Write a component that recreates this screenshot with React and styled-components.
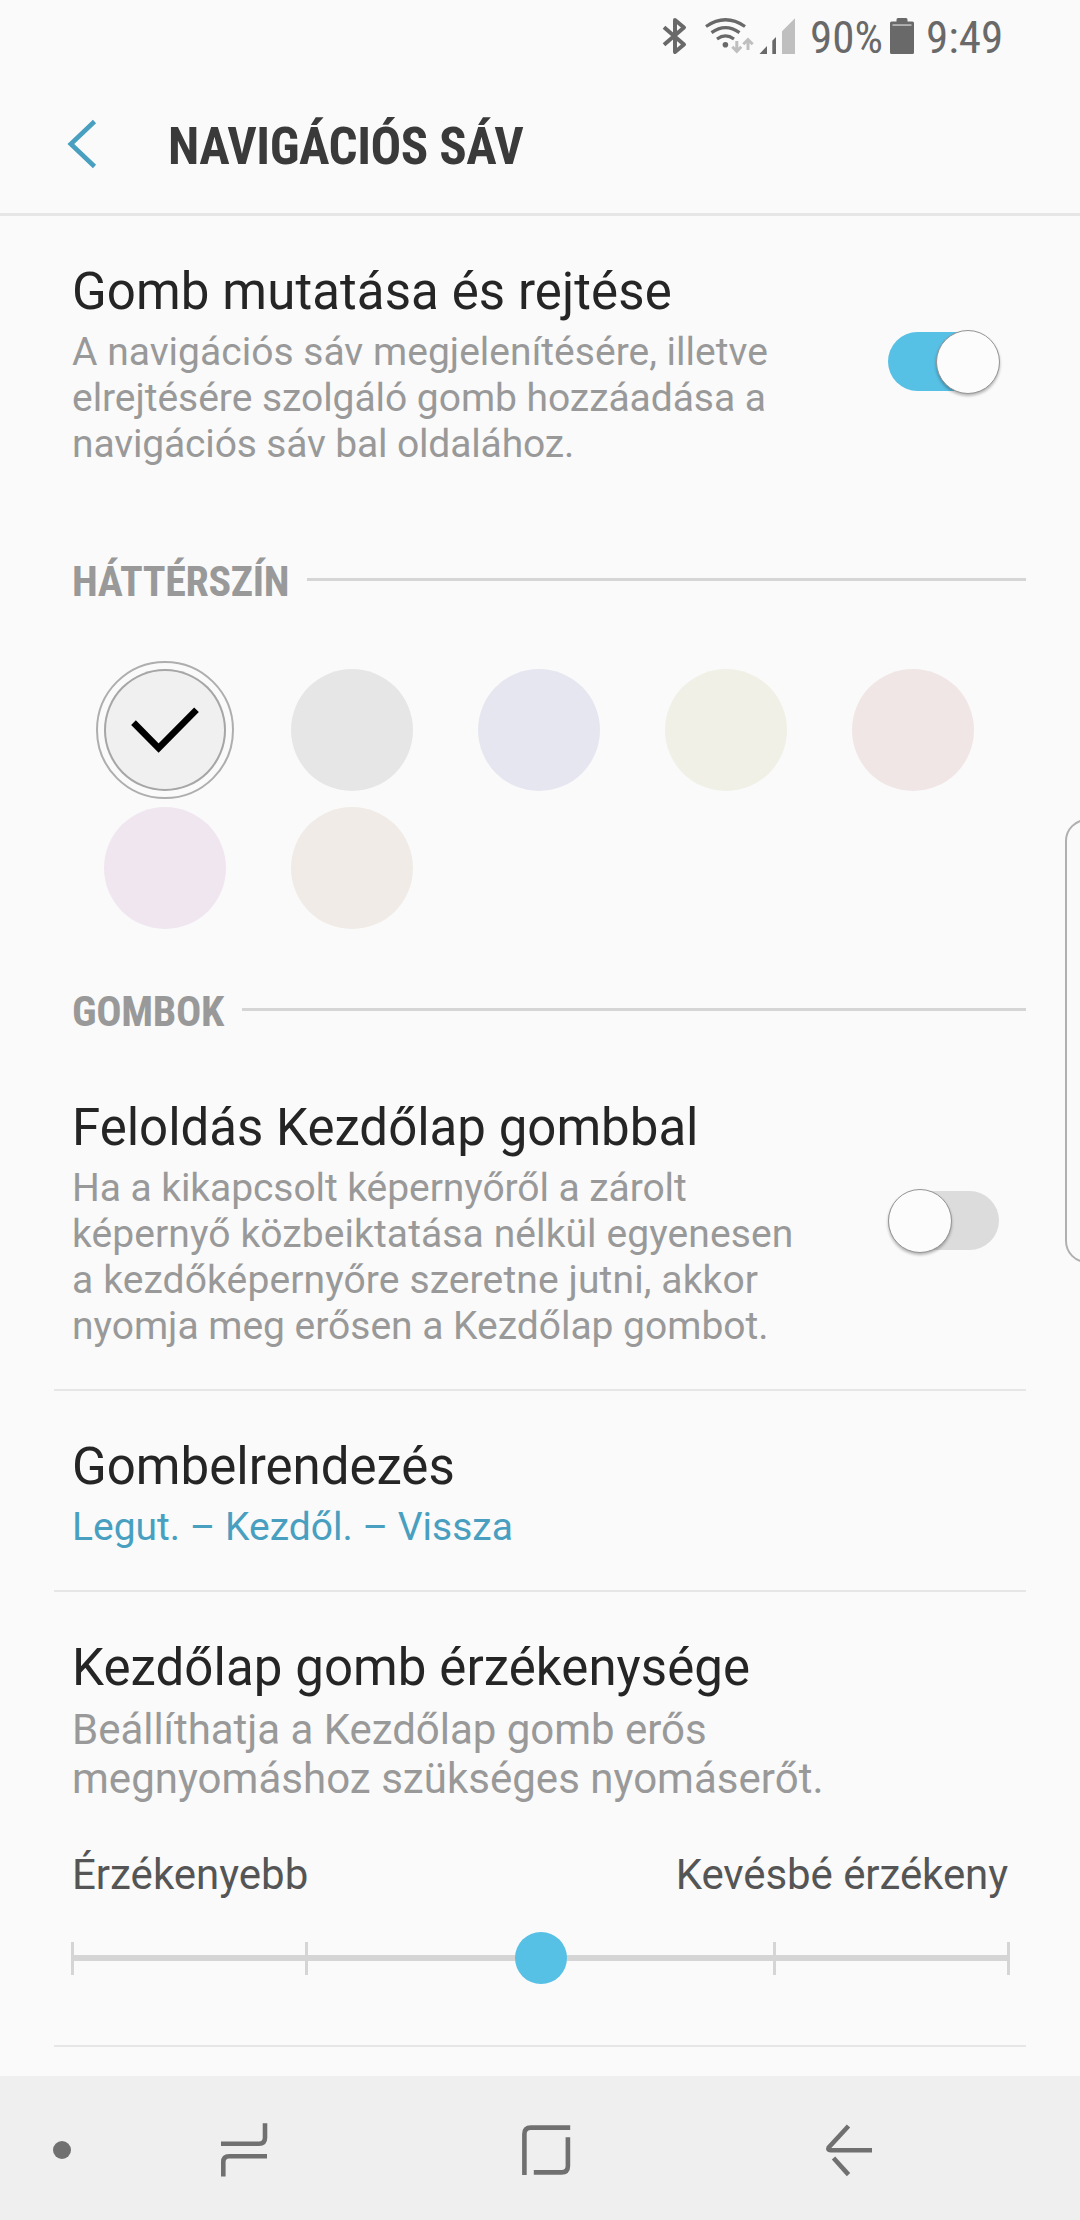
import React from "react";
import styled, { createGlobalStyle } from "styled-components";

const Global = createGlobalStyle`
  *, *::before, *::after { box-sizing: border-box; }
  body { margin: 0; background: #fafafa; }
`;

const Screen = styled.div`
  position: relative;
  width: 1080px;
  height: 2220px;
  display: flex;
  flex-direction: column;
  overflow: hidden;
  background: #fafafa;
  font-family: Roboto, "Noto Sans", sans-serif;
  white-space: nowrap;
`;

const StatusBar = styled.header`
  display: flex;
  height: 72px;
  flex: none;
`;

const StatusIcons = styled.svg`
  width: 810px;
  height: 72px;
  flex: none;
`;

const BatteryIcon = styled.svg`
  width: 26px;
  height: 72px;
  flex: none;
`;

const StatusText = styled.span`
  width: ${(p) => p.$width}px;
  margin-left: ${(p) => p.$gap || 0}px;
  flex: none;
  padding-top: 11px;
  font-family: "Roboto Condensed", Roboto, sans-serif;
  font-stretch: 75%;
  font-size: 45px;
  line-height: 53px;
  color: #696969;
`;

const AppBar = styled.div`
  display: flex;
  align-items: flex-start;
  flex: none;
  height: 144px;
  padding-left: 60px;
  border-bottom: 3px solid #e6e6e6;
`;

const BackChevron = styled.svg`
  width: 48px;
  height: 60px;
  margin-top: 42px;
`;

const PageTitle = styled.h1`
  margin: 45px 0 0 60px;
  font-family: "Roboto Condensed", Roboto, sans-serif;
  font-stretch: 75%;
  font-weight: 700;
  font-size: 51px;
  line-height: 60px;
  letter-spacing: -0.45px;
  color: #3a3a3a;
`;

const Content = styled.main`
  flex: 1;
  display: flex;
  flex-direction: column;
`;

const Row = styled.div`
  display: flex;
  align-items: center;
  justify-content: space-between;
  margin-top: ${(p) => p.$gap || 0}px;
  padding: 46px 81px 40px 72px;
`;

const RowText = styled.div`
  display: flex;
  flex-direction: column;
  gap: 7px;
`;

const RowTitle = styled.div`
  font-size: 51px;
  line-height: 60px;
  letter-spacing: ${(p) => p.$tracking || 0}px;
  color: #252525;
`;

const Summary = styled.div`
  font-size: ${(p) => (p.$large ? 42 : 39)}px;
  line-height: ${(p) => (p.$large ? 49 : 46)}px;
  color: ${(p) => (p.$accent ? "#489fc0" : "#999")};
`;

const Line = styled.span`
  display: block;
  letter-spacing: ${(p) => p.$tracking || 0}px;
`;

const Track = styled.div`
  display: flex;
  align-items: center;
  justify-content: ${(p) => (p.$on ? "flex-end" : "flex-start")};
  width: 111px;
  height: 59px;
  margin-bottom: 6px;
  border-radius: 30px;
  background: ${(p) => (p.$on ? "#57c0e5" : "#dcdcdc")};
`;

const Thumb = styled.div`
  flex: none;
  width: 64px;
  height: 64px;
  margin: 0 ${(p) => (p.$on ? -1 : 0)}px 0 0;
  border: 1px solid #949494;
  border-radius: 50%;
  background: #fcfcfc;
  box-shadow: 0 2px 3px rgba(0, 0, 0, 0.28);
`;

const SectionHeader = styled.div`
  display: flex;
  align-items: center;
  gap: 18px;
  margin-top: 50px;
  padding: 0 54px 0 72px;
`;

const SectionTitle = styled.h2`
  margin: 0;
  font-family: "Roboto Condensed", Roboto, sans-serif;
  font-stretch: 75%;
  font-weight: 700;
  font-size: 42px;
  line-height: 49px;
  letter-spacing: -0.35px;
  color: #999;
`;

const SectionLine = styled.div`
  flex: 1;
  height: 3px;
  margin-bottom: 4px;
  background: #d5d5d5;
`;

const Palette = styled.div`
  display: grid;
  grid-template-columns: repeat(5, 1fr);
  grid-auto-rows: 138px;
  place-items: center;
  margin: 55px 74px 0 72px;
`;

const Ring = styled.div`
  display: grid;
  place-items: center;
  width: 138px;
  height: 138px;
  border: 2px solid ${(p) => (p.$selected ? "#aeaeae" : "transparent")};
  border-radius: 50%;
`;

const Swatch = styled.div`
  display: grid;
  place-items: center;
  width: 122px;
  height: 122px;
  border-radius: 50%;
  background: ${(p) => p.$color};
  box-shadow: ${(p) => (p.$selected ? "inset 0 0 0 2px #a6a6a6" : "none")};
`;

const Divider = styled.div`
  flex: none;
  height: 2px;
  margin: 0 54px;
  background: #e6e6e6;
`;

const SensitivityItem = styled.div`
  display: flex;
  flex-direction: column;
  padding: 46px 70px 61px 72px;
`;

const SliderLabels = styled.div`
  display: flex;
  justify-content: space-between;
  margin: 47px 2px 33px 0;
  font-size: 42px;
  line-height: 49px;
  color: #555;
`;

const Slider = styled.div`
  position: relative;
  display: flex;
  align-items: center;
  justify-content: center;
  height: 52px;
  margin-left: -1px;
`;

const SliderTrack = styled.div`
  position: absolute;
  left: 0;
  right: 0;
  top: 23px;
  height: 6px;
  background: #d5d5d5;
`;

const Ticks = styled.div`
  flex: 1;
  display: flex;
  justify-content: space-between;
`;

const Tick = styled.div`
  width: 3px;
  height: 33px;
  background: #d5d5d5;
`;

const SliderThumb = styled.div`
  position: absolute;
  left: 50%;
  top: 0;
  width: 52px;
  height: 52px;
  margin-left: -26px;
  border-radius: 50%;
  background: #57c0e5;
`;

const EdgeHandle = styled.div`
  position: absolute;
  left: 1065px;
  top: 819px;
  width: 60px;
  height: 444px;
  border: 2px solid #b0b0b0;
  border-radius: 22px;
  background: #fafafa;
`;

const NavBar = styled.nav`
  flex: none;
  display: flex;
  height: 144px;
  background: #efefef;
`;

const NavIcons = styled.svg`
  width: 1080px;
  height: 144px;
`;

const COLORS = ["#f0f0f0", "#e6e6e6", "#e6e6f0", "#f0f0e6", "#f0e6e6", "#f0e6f0", "#f0ebe6"];

function Switch({ on }) {
  return (
    <Track $on={on}>
      <Thumb $on={on} />
    </Track>
  );
}

function Section({ title }) {
  return (
    <SectionHeader>
      <SectionTitle>{title}</SectionTitle>
      <SectionLine />
    </SectionHeader>
  );
}

export default function App() {
  return (
    <Screen>
      <Global />
      <StatusBar>
        <StatusIcons viewBox="0 0 810 72" fill="none">
          <path
            d="M664 27.2 L684 44.5 L675 52 V20 L684 27.5 L664 44.8"
            stroke="#696969"
            strokeWidth="4"
            strokeLinejoin="round"
          />
          <g stroke="#696969" strokeWidth="3.2">
            <path d="M706 26.5 Q725.5 13 745 26.5" />
            <path d="M711.5 32.6 Q725.5 22.6 739.5 32.6" />
            <path d="M717 39 Q725.5 32.8 734 39" />
          </g>
          <circle cx="725.4" cy="44.7" r="2.8" fill="#696969" />
          <g stroke="#bfbfbf" strokeWidth="3">
            <path d="M736.8 41 V51.5 M732.3 46.8 L736.8 51.4 L741.3 46.8" />
            <path d="M748 50 V39.6 M743.3 44.2 L748 39.6 L752.7 44.2" />
          </g>
          <path d="M759.5 54 L767 46 V54 Z" fill="#696969" />
          <path d="M772.3 54 V40.8 L776 37 V54 Z" fill="#696969" />
          <path d="M782 54 V31.3 L795 18.3 V54 Z" fill="#bfbfbf" />
        </StatusIcons>
        <StatusText $width={80}>90%</StatusText>
        <BatteryIcon viewBox="890 0 26 72">
          <path
            d="M896.5 21.5 V19.5 Q896.5 18 898 18 H906 Q907.5 18 907.5 19.5 V21.5 H912.5 Q914 21.5 914 23 V52.5 Q914 54 912.5 54 H891.5 Q890 54 890 52.5 V23 Q890 21.5 891.5 21.5 Z"
            fill="#696969"
          />
          <rect x="892.5" y="24.3" width="19" height="1.5" fill="#c4c4c4" />
        </BatteryIcon>
        <StatusText $width={90} $gap={10}>9:49</StatusText>
      </StatusBar>

      <AppBar>
        <BackChevron viewBox="60 114 48 60" fill="none">
          <path d="M94.5 121.5 L70.8 144 L94.5 166.5" stroke="#489fc0" strokeWidth="4.6" />
        </BackChevron>
        <PageTitle>NAVIGÁCIÓS SÁV</PageTitle>
      </AppBar>

      <Content>
        <Row>
          <RowText>
            <RowTitle $tracking={0.1}>Gomb mutatása és rejtése</RowTitle>
            <Summary>
              <Line $tracking={0.02}>A navigációs sáv megjelenítésére, illetve</Line>
              <Line $tracking={-0.05}>elrejtésére szolgáló gomb hozzáadása a</Line>
              <Line $tracking={-0.15}>navigációs sáv bal oldalához.</Line>
            </Summary>
          </RowText>
          <Switch on />
        </Row>

        <Section title="HÁTTÉRSZÍN" />
        <Palette>
          {COLORS.map((color, i) => (
            <Ring key={color} $selected={i === 0}>
              <Swatch $color={color} $selected={i === 0}>
                {i === 0 && (
                  <svg width="80" height="60" viewBox="-40 -30 80 60" fill="none">
                    <path d="M-31.5 -7.4 L-6.4 18 L31.5 -20.3" stroke="#000" strokeWidth="6.6" />
                  </svg>
                )}
              </Swatch>
            </Ring>
          ))}
        </Palette>

        <Section title="GOMBOK" />
        <Row $gap={16}>
          <RowText>
            <RowTitle>Feloldás Kezdőlap gombbal</RowTitle>
            <Summary>
              <Line $tracking={-0.07}>Ha a kikapcsolt képernyőről a zárolt</Line>
              <Line $tracking={0.1}>képernyő közbeiktatása nélkül egyenesen</Line>
              <Line $tracking={0.12}>a kezdőképernyőre szeretne jutni, akkor</Line>
              <Line $tracking={-0.02}>nyomja meg erősen a Kezdőlap gombot.</Line>
            </Summary>
          </RowText>
          <Switch />
        </Row>
        <Divider />
        <Row>
          <RowText>
            <RowTitle>Gombelrendezés</RowTitle>
            <Summary $accent>Legut. – Kezdől. – Vissza</Summary>
          </RowText>
        </Row>
        <Divider />
        <SensitivityItem>
          <RowText>
            <RowTitle $tracking={0.07}>Kezdőlap gomb érzékenysége</RowTitle>
            <Summary $large>
              <Line $tracking={-0.03}>Beállíthatja a Kezdőlap gomb erős</Line>
              <Line $tracking={0.03}>megnyomáshoz szükséges nyomáserőt.</Line>
            </Summary>
          </RowText>
          <SliderLabels>
            <Line>Érzékenyebb</Line>
            <Line $tracking={-0.08}>Kevésbé érzékeny</Line>
          </SliderLabels>
          <Slider>
            <SliderTrack />
            <Ticks>
              {[0, 1, 2, 3, 4].map((n) => (
                <Tick key={n} />
              ))}
            </Ticks>
            <SliderThumb />
          </Slider>
        </SensitivityItem>
        <Divider />
      </Content>

      <NavBar>
        <NavIcons viewBox="0 2076 1080 144" fill="none" stroke="#707070" strokeWidth="4.6">
          <circle cx="62" cy="2150" r="9" fill="#707070" stroke="none" />
          <path d="M221 2143.8 H259 Q265 2143.8 265 2137.8 V2123.3" />
          <path d="M267 2156.2 H229 Q223.3 2156.2 223.3 2162 V2176.6" />
          <path d="M524.4 2175 V2134 Q524.4 2127.6 530.8 2127.6 H570.2" />
          <path d="M567.9 2137.3 V2166 Q567.9 2172.4 561.5 2172.4 H533.8" />
          <path d="M848.5 2126 L828.7 2147.5 Q827.5 2150.3 830.5 2150.3 H872" />
          <path d="M833.5 2158 L848.5 2174.6" />
        </NavIcons>
      </NavBar>

      <EdgeHandle />
    </Screen>
  );
}
